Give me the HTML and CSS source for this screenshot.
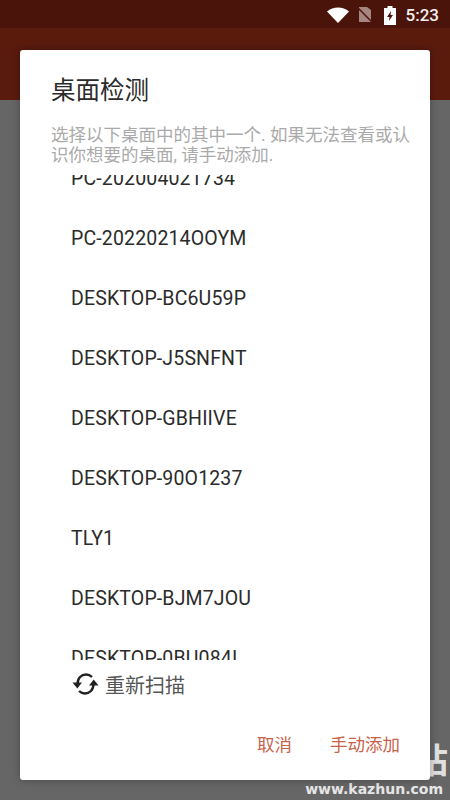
FILE: index.html
```html
<!DOCTYPE html>
<html>

<head>
    <title>桌面检测</title>
    <link rel="stylesheet" href="styles.css">
</head>

<body>
    <div class="screen">
        <div class="status-bar">
            <svg class="wifi" width="22" height="16" viewBox="0 0 22 16">
                <path d="M0 4.500 C6 -1 16 -1 22 4.500 L11 16 Z" fill="#fff" />
            </svg>
            <svg class="sim" width="16" height="16" viewBox="0 0 16 16">
                <path d="M2 0 H10 L14 3 V15 H2 Z" fill="#a58680" />
                <path d="M0 0 L16 16" stroke="#4a140a" stroke-width="1.500" />
            </svg>
            <svg class="battery" width="12" height="19" viewBox="0 0 12 19">
                <path d="M3.500 0 H8.500 V2 H12 V19 H0 V2 H3.500 Z" fill="#fff" />
                <path d="M7 5 L3 11 H5.500 L5 15 L9 9 H6.500 Z" fill="#4a140a" />
            </svg>
            <span class="clock">5:23</span>
        </div>
        <div class="app-bar"></div>

        <div class="watermark-char">站</div>
        <div class="watermark-url">www.kazhun.com</div>

        <div class="dialog">
            <h2 class="dialog-title">桌面检测</h2>
            <p class="dialog-text">选择以下桌面中的其中一个. 如果无法查看或认识你想要的桌面, 请手动添加.</p>
            <div class="host-list">
                <ul class="host-items">
                    <li>PC-202004021734</li>
                    <li>PC-20220214OOYM</li>
                    <li>DESKTOP-BC6U59P</li>
                    <li>DESKTOP-J5SNFNT</li>
                    <li>DESKTOP-GBHIIVE</li>
                    <li>DESKTOP-90O1237</li>
                    <li>TLY1</li>
                    <li>DESKTOP-BJM7JOU</li>
                    <li>DESKTOP-0BU084I</li>
                </ul>
            </div>
            <div class="rescan">
                <svg width="27" height="24" viewBox="0 0 27 24">
                    <path d="M5.500 12 C5.500 6 9.500 2.500 14 2.500 C16.500 2.500 18.500 3.500 20 5" fill="none" stroke="#222" stroke-width="2.400" />
                    <path d="M0.500 10.500 H10 L5.300 16.500 Z" fill="#222" />
                    <path d="M21.500 12 C21.500 18 17.500 21.500 13 21.500 C10.500 21.500 8.500 20.500 7 19" fill="none" stroke="#222" stroke-width="2.400" />
                    <path d="M26.500 13.500 H17 L21.700 7.500 Z" fill="#222" />
                </svg>
                <span>重新扫描</span>
            </div>
            <div class="dialog-actions">
                <span>取消</span>
                <span>手动添加</span>
            </div>
        </div>
    </div>
</body>

</html>
```

FILE: styles.css
```css
* {
    box-sizing: border-box;
}

body {
    margin: 0;
    padding: 0;
    font-family: Roboto, "Noto Sans CJK SC", sans-serif;
}

.screen {
    position: relative;
    width: 450px;
    height: 800px;
    overflow: hidden;
    background-color: #666;
}

.status-bar {
    height: 28px;
    padding-top: 2px;
    background-color: #4a140a;
    display: flex;
    align-items: center;
    justify-content: flex-end;
    padding-right: 11px;
    color: #f2eeee;
}

.wifi {
    margin-right: 8px;
}

.sim {
    margin-right: 11px;
}

.battery {
    margin-right: 10px;
}

.clock {
    font-size: 17px;
    font-weight: 500;
}

.app-bar {
    height: 72px;
    background-color: #5a1b0d;
}

.dialog {
    position: absolute;
    left: 20px;
    top: 50px;
    width: 410px;
    height: 730px;
    background-color: #fff;
    border-radius: 3px;
    box-shadow: 0 0 8px rgba(0, 0, 0, 0.3);
    display: flex;
    flex-direction: column;
}

.dialog-title {
    margin: 0;
    padding: 25px 31px 0;
    height: 68px;
    font-size: 24.500px;
    line-height: 32px;
    font-weight: 400;
    color: #2b2b2b;
}

.dialog-text {
    margin: 0;
    padding: 8px 15px 0 31px;
    height: 57px;
    font-size: 17.500px;
    line-height: 19.500px;
    color: #aaa;
}

.host-list {
    height: 485px;
    overflow: hidden;
}

.host-items {
    list-style: none;
    margin: -26px 0 0;
    padding: 0 0 0 51px;
}

.host-items li {
    height: 60px;
    line-height: 60px;
    font-size: 19.500px;
    letter-spacing: 0.150px;
    color: #2b2b2b;
}

.rescan {
    display: flex;
    align-items: center;
    gap: 6px;
    height: 48px;
    padding-left: 52px;
    font-size: 20px;
    color: #555;
}

.dialog-actions {
    display: flex;
    justify-content: flex-end;
    gap: 38px;
    padding: 23px 30px 0 0;
    font-size: 17.500px;
    color: #c8634a;
}

.watermark-char {
    position: absolute;
    right: 2px;
    top: 741px;
    font-size: 34px;
    line-height: 40px;
    font-weight: 700;
    color: #e0e0e0;
}

.watermark-url {
    position: absolute;
    right: 7px;
    top: 779px;
    font-family: "DejaVu Sans", sans-serif;
    font-size: 14px;
    line-height: 20px;
    font-weight: 700;
    color: #e6e6e6;
}
```
